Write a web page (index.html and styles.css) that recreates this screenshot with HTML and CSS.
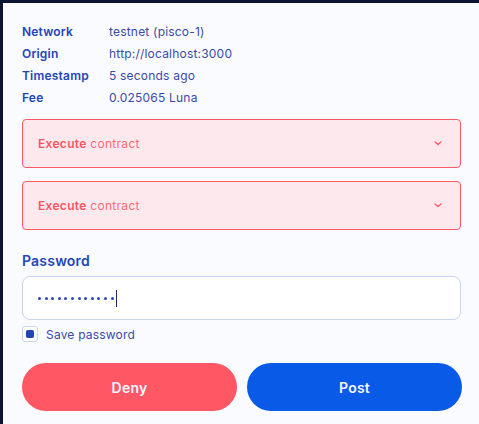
FILE: index.html
```html
<!DOCTYPE html>
<html lang="en">
<head>
<meta charset="utf-8">
<link rel="stylesheet" href="styles.css">
</head>
<body>
<div class="card">
  <dl class="details">
    <div class="row"><dt>Network</dt><dd>testnet (pisco-1)</dd></div>
    <div class="row"><dt>Origin</dt><dd>http://localhost:3000</dd></div>
    <div class="row"><dt>Timestamp</dt><dd>5 seconds ago</dd></div>
    <div class="row"><dt>Fee</dt><dd>0.025065 Luna</dd></div>
  </dl>
  <div class="msgs">
    <div class="msg"><span class="msg-title"><strong>Execute</strong> contract</span>
      <svg class="chev" width="8" height="5" viewBox="0 0 8 5"><path d="M1 1l3 2.6L7 1" fill="none" stroke="#ff5561" stroke-width="1.3" stroke-linecap="round" stroke-linejoin="round"/></svg>
    </div>
    <div class="msg"><span class="msg-title"><strong>Execute</strong> contract</span>
      <svg class="chev" width="8" height="5" viewBox="0 0 8 5"><path d="M1 1l3 2.6L7 1" fill="none" stroke="#ff5561" stroke-width="1.3" stroke-linecap="round" stroke-linejoin="round"/></svg>
    </div>
  </div>
  <label class="pw-label">Password</label>
  <div class="input">
    <span class="dots"><i></i><i></i><i></i><i></i><i></i><i></i><i></i><i></i><i></i><i></i><i></i><i></i></span><span class="caret"></span>
  </div>
  <div class="check">
    <span class="box"><span class="fill"></span></span>
    <span class="check-label">Save password</span>
  </div>
  <div class="actions">
    <button class="btn deny">Deny</button>
    <button class="btn post">Post</button>
  </div>
</div>
</body>
</html>
```
FILE: styles.css
```css
html, body { margin: 0; padding: 0; }
body {
  background: #0b1433;
  width: 479px;
  height: 424px;
  overflow: hidden;
  font-family: Inter, "Noto Sans", sans-serif;
}
.card {
  margin: 3px 0 0 3px;
  background: #f9fbff;
  padding: 18px 18px 20px 19px;
  height: 424px;
  box-sizing: border-box;
}
.details { margin: 0; }
.row {
  display: flex;
  line-height: 22px;
  font-size: 12px;
  letter-spacing: 0.2px;
}
.row dt {
  width: 87px;
  font-weight: 600;
  color: #2544b7;
}
.row dd {
  margin: 0;
  color: #3a4aa8;
}
.msgs {
  margin-top: 10px;
  display: flex;
  flex-direction: column;
  gap: 13px;
}
.msg {
  height: 49px;
  box-sizing: border-box;
  border: 1px solid #ff5a66;
  border-radius: 4px;
  background: #fde8ee;
  display: flex;
  align-items: center;
  justify-content: space-between;
  padding: 0 18px 0 15px;
  font-size: 12px;
  letter-spacing: 0.3px;
  color: #ff6b75;
}
.msg strong { font-weight: 600; color: #ff5561; }
.chev { display: block; }
.pw-label {
  display: block;
  margin-top: 21px;
  font-size: 14px;
  line-height: 20px;
  font-weight: 600;
  letter-spacing: 0.2px;
  color: #2544b7;
}
.input {
  margin-top: 5px;
  height: 44px;
  box-sizing: border-box;
  border: 1px solid #c9d4ee;
  border-radius: 8px;
  background: #fff;
  display: flex;
  align-items: center;
  padding-left: 15px;
}
.dots { display: flex; gap: 3.6px; }
.dots i {
  display: block;
  width: 3px;
  height: 3px;
  border-radius: 50%;
  background: #2d47b5;
}
.caret {
  display: block;
  width: 1.5px;
  height: 17px;
  background: #1b2a6b;
  margin-left: 2px;
}
.check {
  margin-top: 6px;
  display: flex;
  align-items: center;
  gap: 8px;
}
.box {
  width: 16px;
  height: 16px;
  box-sizing: border-box;
  border: 1px solid #c9d4ee;
  border-radius: 3px;
  background: #fff;
  display: flex;
  align-items: center;
  justify-content: center;
}
.fill {
  width: 8px;
  height: 8px;
  border-radius: 2px;
  background: #2043b5;
}
.check-label {
  font-size: 12px;
  letter-spacing: 0.2px;
  color: #3a4aa8;
}
.actions {
  margin-top: 21px;
  display: flex;
  gap: 10px;
  width: 440px;
}
.btn {
  flex: 1;
  height: 48px;
  border: 0;
  border-radius: 24px;
  font-family: inherit;
  font-size: 14px;
  font-weight: 600;
  letter-spacing: 0.2px;
  color: #f4f6ff;
}
.deny { background: #ff5864; }
.post { background: #0a5ae8; }
```
